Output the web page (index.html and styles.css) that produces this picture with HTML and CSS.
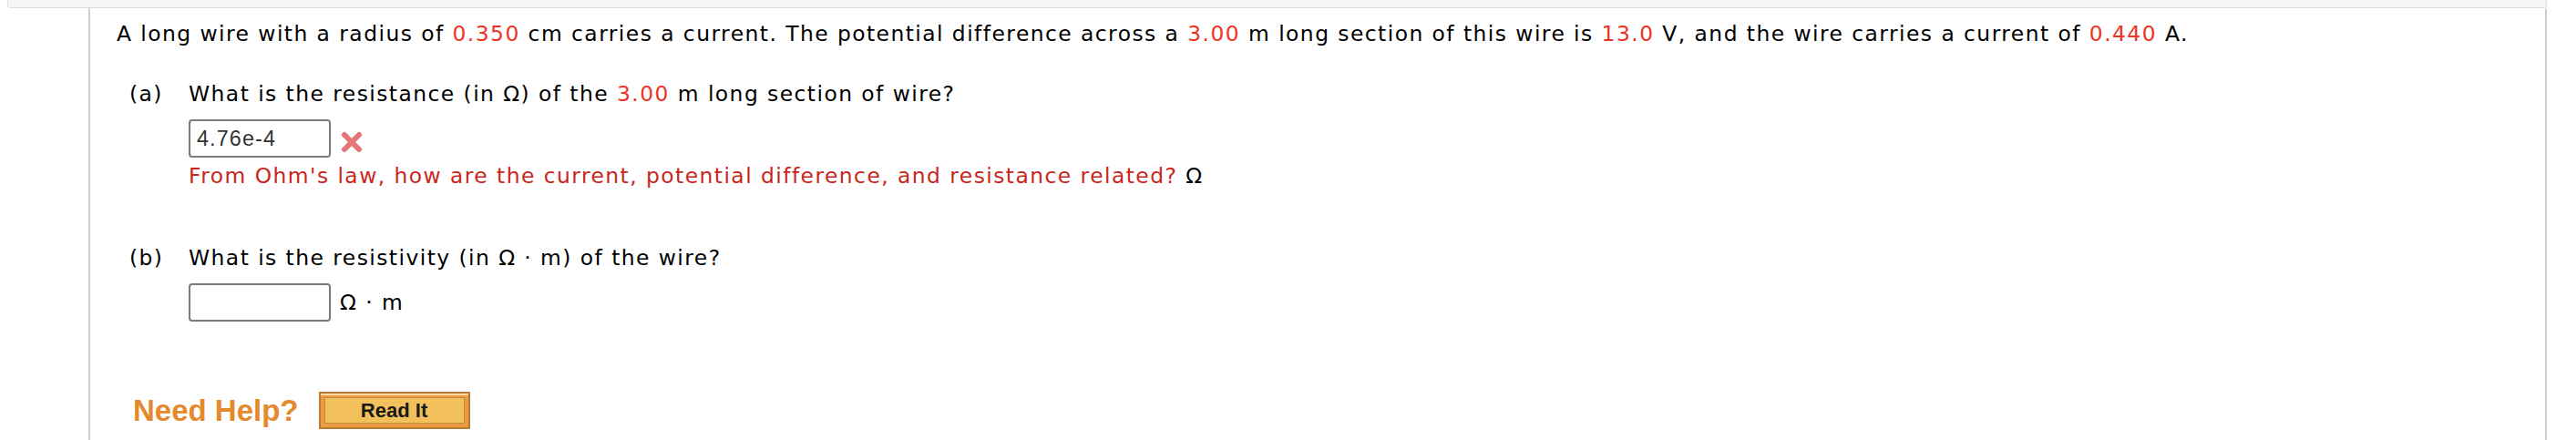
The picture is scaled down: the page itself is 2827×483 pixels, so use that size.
FILE: index.html
```html
<!DOCTYPE html>
<html lang="en">
<head>
    <meta charset="UTF-8">
    <title>Resistance of a Wire</title>
    <link rel="stylesheet" href="styles.css">
</head>
<body>

    <div class="page">
        <div class="topbar"></div>

        <div class="question">
            <!-- Problem statement -->
            <p class="stem">A long wire with a radius of <span class="num">0.350</span> cm carries a current. The potential difference across a <span class="num">3.00</span> m long section of this wire is <span class="num">13.0</span> V, and the wire carries a current of <span class="num">0.440</span> A.</p>

            <!-- Part (a) -->
            <div class="part part-a">
                <span class="label">(a)</span>
                <div class="part-body">
                    <p class="prompt">What is the resistance (in &#937;) of the <span class="num">3.00</span> m long section of wire?</p>
                    <div class="answer-row">
                        <input type="text" class="answer" value="4.76e-4">
                        <svg class="mark" width="26" height="24" viewBox="0 0 26 24">
                            <path d="M5 4 L21 20 M21 4 L5 20" stroke="#e4676a" stroke-width="6" stroke-linecap="round"/>
                        </svg>
                    </div>
                    <p class="hint">From Ohm's law, how are the current, potential difference, and resistance related? <span class="unit">&#937;</span></p>
                </div>
            </div>

            <!-- Part (b) -->
            <div class="part part-b">
                <span class="label">(b)</span>
                <div class="part-body">
                    <p class="prompt">What is the resistivity (in &#937; &middot; m) of the wire?</p>
                    <div class="answer-row">
                        <input type="text" class="answer" value="">
                        <span class="unit">&#937; &middot; m</span>
                    </div>
                </div>
            </div>

            <!-- Help -->
            <div class="help">
                <span class="need-help">Need Help?</span>
                <button class="read-it">Read It</button>
            </div>
        </div>
    </div>

</body>
</html>
```

FILE: styles.css
```css
body {
    margin: 0;
    font-family: "DejaVu Sans", Verdana, sans-serif;
    font-size: 23.4px;
    line-height: 28px;
    letter-spacing: 1.45px;
    color: #000;
    background-color: #fff;
}

p {
    margin: 0;
}

.page {
    width: 2795px;
}

.topbar {
    margin-left: 8px;
    height: 8px;
    background-color: #f5f5f5;
    border: 1px solid #dcdcdc;
    border-top: none;
    border-radius: 0 0 4px 4px;
}

.question {
    margin-left: 97px;
    min-height: 474px;
    border-left: 2px solid #cfcfcf;
    border-right: 2px solid #cfcfcf;
    padding: 14px 0 0 29px;
    box-sizing: border-box;
}

.num {
    color: #ec3424;
}

.part {
    display: flex;
    margin-left: 14px;
}

.part-a {
    margin-top: 38px;
}

.part-b {
    margin-top: 62px;
}

.label {
    width: 65px;
    flex-shrink: 0;
}

.answer-row {
    display: flex;
    align-items: center;
    gap: 10px;
    margin-top: 14px;
}

.answer {
    width: 156px;
    height: 42px;
    box-sizing: border-box;
    margin: 0;
    padding: 0 7px;
    border: 2px solid #7a7a7a;
    border-radius: 4px;
    font-family: "Liberation Sans", Arial, sans-serif;
    font-size: 23.4px;
    letter-spacing: 1.1px;
    color: #333;
    background-color: #fff;
}

.mark {
    margin-top: 7px;
    opacity: 0.9;
}

.hint {
    margin-top: 6px;
    color: #c9261c;
}

.hint .unit {
    color: #000;
}

.help {
    display: flex;
    align-items: center;
    gap: 22px;
    margin: 77px 0 0 18px;
    letter-spacing: 0;
}

.need-help {
    font-family: "Liberation Sans", Arial, sans-serif;
    font-weight: bold;
    font-size: 33px;
    color: #e5892d;
}

.read-it {
    width: 166px;
    height: 41px;
    border: 2px solid #b97a33;
    background-color: #f3c15c;
    box-shadow: inset 0 2px 0 #f9d9a6, inset 0 0 0 4px #eb9c40, inset 0 0 0 5px #c48b3e;
    font-family: "Liberation Sans", Arial, sans-serif;
    font-weight: bold;
    font-size: 22px;
    color: #1a1a1a;
    padding: 0;
}
```
